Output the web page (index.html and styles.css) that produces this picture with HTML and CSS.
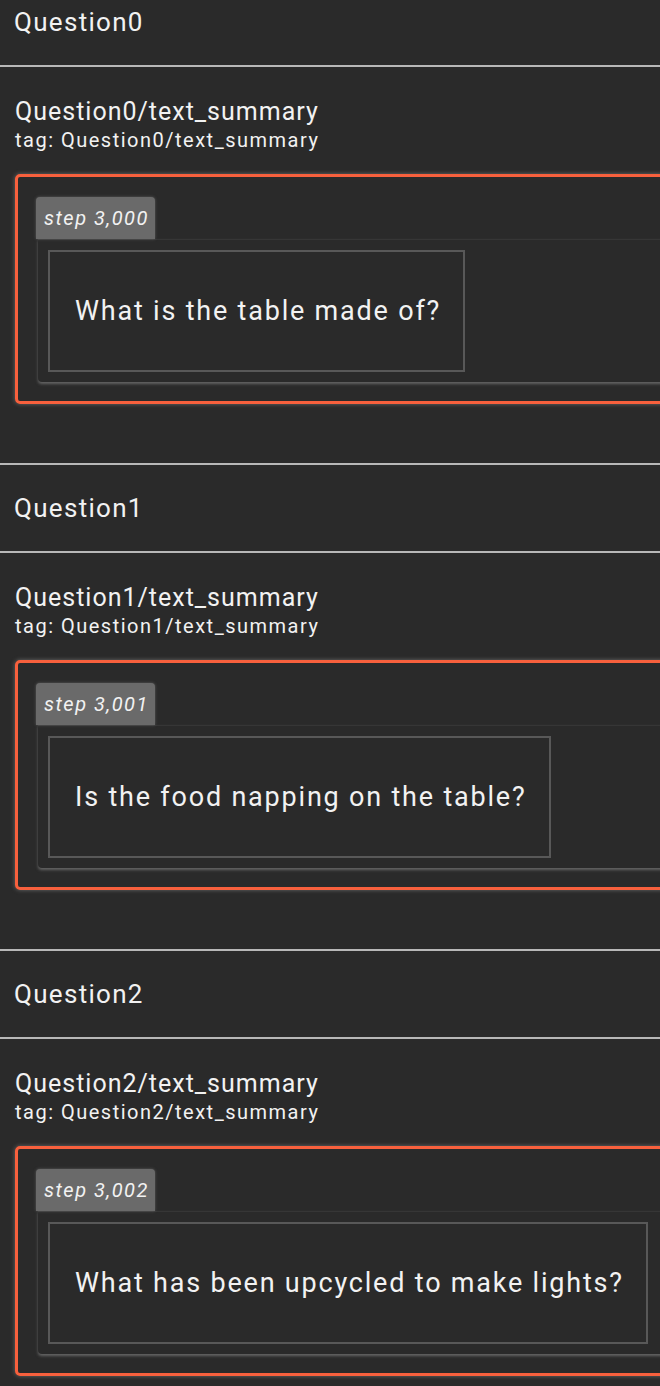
FILE: index.html
```html
<!DOCTYPE html>
<html lang="en">
<head>
  <meta charset="UTF-8" />
  <meta name="viewport" content="width=device-width, initial-scale=1.0"/>
  <title>Text summaries</title>
  <link rel="stylesheet" href="styles.css">
</head>
<body>
  <div class="page">

    <div class="section">
      <div class="section-head">Question0</div>
      <div class="section-body">
        <div class="summary-title">Question0/text_summary</div>
        <div class="summary-tag">tag: Question0/text_summary</div>
        <div class="run-box">
          <div class="step-chip">step 3,000</div>
          <div class="text-card">
            <div class="text-cell">What is the table made of?</div>
          </div>
        </div>
      </div>
    </div>

    <div class="section">
      <div class="section-head">Question1</div>
      <div class="section-body">
        <div class="summary-title">Question1/text_summary</div>
        <div class="summary-tag">tag: Question1/text_summary</div>
        <div class="run-box">
          <div class="step-chip">step 3,001</div>
          <div class="text-card">
            <div class="text-cell">Is the food napping on the table?</div>
          </div>
        </div>
      </div>
    </div>

    <div class="section">
      <div class="section-head">Question2</div>
      <div class="section-body">
        <div class="summary-title">Question2/text_summary</div>
        <div class="summary-tag">tag: Question2/text_summary</div>
        <div class="run-box">
          <div class="step-chip">step 3,002</div>
          <div class="text-card">
            <div class="text-cell">What has been upcycled to make lights?</div>
          </div>
        </div>
      </div>
    </div>

  </div>
</body>
</html>
```

FILE: styles.css
```css
body {
  font-family: Roboto, "Liberation Sans", sans-serif;
  background: #2a2a2a;
  color: #f2f2f2;
  margin: 0;
  overflow: hidden;
}
.page {
  margin-top: -23px;
}
.section-head {
  height: 86px;
  display: flex;
  align-items: center;
  padding-left: 14px;
  font-size: 26px;
  letter-spacing: 1.3px;
  border-top: 2px solid #b8b8b8;
  border-bottom: 2px solid #b8b8b8;
}
.section-body {
  padding: 30px 0 59px 15px;
}
.summary-title {
  font-size: 25px;
  line-height: 30px;
  letter-spacing: 1px;
}
.summary-tag {
  font-size: 20px;
  line-height: 26px;
  letter-spacing: 1.5px;
}
.run-box {
  width: 720px;
  margin-top: 21px;
  border: 3px solid #f7603d;
  border-radius: 5px;
  padding: 20px 0 19px 18px;
  box-shadow: 0 0 4px rgba(150, 150, 150, 0.6);
}
.step-chip {
  display: inline-block;
  background: #6a6a6a;
  border-radius: 4px 4px 0 0;
  padding: 0 6px 0 8px;
  height: 42px;
  line-height: 42px;
  font-size: 20px;
  font-style: italic;
  letter-spacing: 1.5px;
  box-shadow: 0 0 3px rgba(120, 120, 120, 0.7);
}
.text-card {
  margin-left: 2px;
  padding: 10px;
  border-top: 1px solid #363636;
  border-radius: 0 0 0 4px;
  box-shadow: 0 2px 3px rgba(140, 140, 140, 0.6);
}
.text-cell {
  display: inline-block;
  border: 2px solid #585858;
  padding: 40px 22px 40px 25px;
  font-size: 27px;
  line-height: 38px;
  letter-spacing: 1.8px;
}
```
